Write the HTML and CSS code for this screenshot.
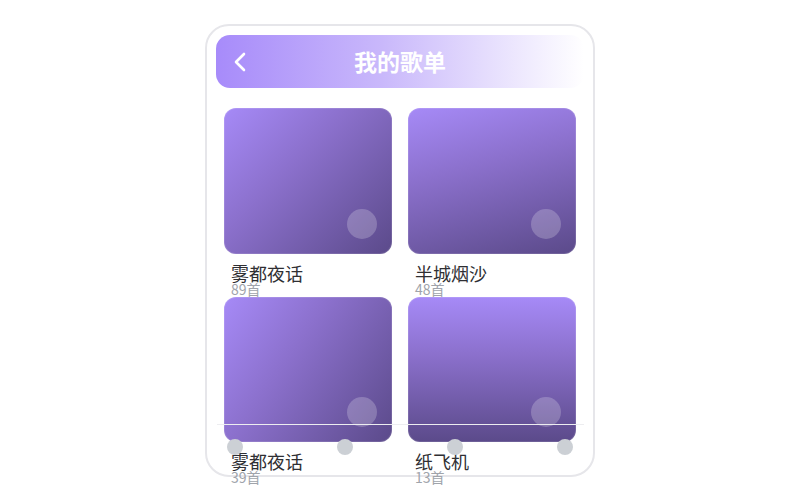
FILE: index.html
```html
<!DOCTYPE html>
<html lang="zh">
<head>
<meta charset="utf-8">
<link rel="stylesheet" href="styles.css">
</head>
<body>
<div class="phone">
  <header class="topbar">
    <svg class="back" width="14" height="20" viewBox="0 0 14 20"><polyline points="11,2 3,10 11,18" fill="none" stroke="#fff" stroke-width="2.6" stroke-linecap="round" stroke-linejoin="round"/></svg>
    <h1 class="title">我的歌单</h1>
  </header>
  <div class="grid">
    <div class="item">
      <div class="cover g1"><span class="play"></span></div>
      <div class="name">雾都夜话</div>
      <div class="count">89首</div>
    </div>
    <div class="item">
      <div class="cover g2"><span class="play"></span></div>
      <div class="name">半城烟沙</div>
      <div class="count">48首</div>
    </div>
    <div class="item">
      <div class="cover g3"><span class="play"></span></div>
      <div class="name">雾都夜话</div>
      <div class="count">39首</div>
    </div>
    <div class="item">
      <div class="cover g4"><span class="play"></span></div>
      <div class="name">纸飞机</div>
      <div class="count">13首</div>
    </div>
  </div>
  <nav class="tabbar">
    <span class="dot"></span>
    <span class="dot"></span>
    <span class="dot"></span>
    <span class="dot"></span>
  </nav>
</div>
</body>
</html>
```
FILE: styles.css
```css
html, body {
  margin: 0;
  padding: 0;
  background: #fff;
}
body {
  min-height: 500px;
  font-family: "Noto Sans CJK SC", "Noto Sans", sans-serif;
  overflow: visible;
}
.phone {
  position: relative;
  box-sizing: border-box;
  width: 390px;
  height: 453px;
  margin: 24px auto 0;
  border: 2px solid #e6e6ea;
  border-radius: 24px;
  background: #fff;
  overflow: visible;
}
.topbar {
  position: relative;
  display: flex;
  align-items: center;
  justify-content: center;
  height: 53px;
  margin: 9px 9px 0;
  border-radius: 14px;
  background: linear-gradient(90deg, #a78bfa 0%, #c9b8fb 45%, #ffffff 100%);
}
.back {
  position: absolute;
  left: 17px;
  top: 17px;
}
.title {
  margin: 0;
  font-size: 23px;
  font-weight: 700;
  color: #fff;
  line-height: 1;
}
.grid {
  display: grid;
  grid-template-columns: 168px 168px;
  column-gap: 16px;
  justify-content: center;
  margin-top: 20px;
}
.cover {
  position: relative;
  height: 146px;
  border-radius: 12px;
  box-shadow: inset 0 0 0 1px rgba(255,255,255,0.12);
}
.item:nth-child(n+3) .cover {
  height: 145px;
}
.g1 { background: linear-gradient(135deg, #a68af7 0%, #8b70cc 40%, #5b4a8a 100%); }
.g2 { background: linear-gradient(165deg, #a68af7 0%, #8b70cc 40%, #5b4a8a 100%); }
.g3 { background: linear-gradient(125deg, #a68af7 0%, #8b70cc 40%, #5b4a8a 100%); }
.g4 { background: linear-gradient(180deg, #a68af7 0%, #8b70cc 40%, #5b4a8a 100%); }
.play {
  position: absolute;
  right: 15px;
  bottom: 15px;
  width: 30px;
  height: 30px;
  border-radius: 50%;
  background: rgba(255,255,255,0.22);
}
.name {
  margin-top: 10px;
  padding-left: 7px;
  font-size: 18px;
  line-height: 18px;
  color: #2f2f33;
}
.count {
  padding-left: 7px;
  font-size: 14px;
  line-height: 15px;
  color: #a0a4ab;
}
.tabbar {
  position: absolute;
  left: 10px;
  right: 9px;
  top: 398px;
  display: flex;
  justify-content: space-between;
  padding: 14px 11px 0 10px;
  border-top: 1px solid #ededf0;
}
.dot {
  width: 16px;
  height: 16px;
  border-radius: 50%;
  background: #ccd0d5;
}
```
